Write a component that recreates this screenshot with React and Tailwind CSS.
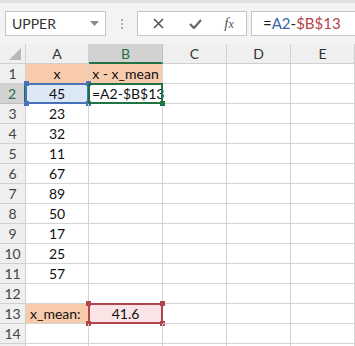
import React from "react";

const cols = ["A", "B", "C", "D", "E"];
const values = [null, 45, 23, 32, 11, 67, 89, 50, 17, 25, 57, null, null, null, null];

function Handle({ className }) {
    return <div className={"absolute w-[5px] h-[5px] " + className}></div>
}

function Cell({ children, className = "" }) {
    return (
        <div className={"relative h-[20px] border-r border-b border-[#d4d4d4] text-[14px] leading-[19px] text-[#111] whitespace-nowrap " + className}>
            {children}
        </div>
    )
}

function RowHead({ n, active }) {
    return (
        <div className={"h-[20px] border-r border-b flex items-center justify-center text-[14px] " +
            (active ? "bg-[#d2d2d2] border-r-[#217346] border-r-2 border-b-[#bdbdbd] text-[#217346]" : "bg-[#efefef] border-[#d0d0d0] text-[#444]")}>
            {n}
        </div>
    )
}

export default function App() {
    const rows = [];
    for (let r = 1; r <= 15; r++) {
        let a = null, b = null;
        if (r === 1) {
            a = <Cell className="bg-[#f8cbad] text-center">x</Cell>
            b = <Cell className="bg-[#f8cbad] text-center">x - x_mean</Cell>
        } else if (r === 2) {
            a = (
                <Cell className="bg-[#dde8f6] text-center">
                    45
                    <div className="absolute -left-px -top-px -right-px -bottom-px border-2 border-[#4a72b8]"></div>
                    <Handle className="bg-[#4a72b8] -left-[2px] -top-[3px]" />
                    <Handle className="bg-[#4a72b8] -right-[3px] -top-[3px]" />
                    <Handle className="bg-[#4a72b8] -left-[2px] -bottom-[3px]" />
                    <Handle className="bg-[#4a72b8] -right-[3px] -bottom-[3px]" />
                </Cell>
            )
            b = (
                <Cell className="pl-[3px] z-10">
                    =A2-$B$13
                    <div className="absolute -left-px -top-px -right-px -bottom-px border-2 border-[#217346]"></div>
                    <Handle className="bg-[#217346] -right-[3px] -bottom-[3px]" />
                </Cell>
            )
        } else if (r === 13) {
            a = <Cell className="bg-[#f8cbad] pl-[4px]">x_mean:</Cell>
            b = (
                <Cell className="bg-[#fbe4e5] text-center">
                    41.6
                    <div className="absolute -left-px -top-px -right-px -bottom-px border-2 border-[#b2444c]"></div>
                    <Handle className="bg-[#b2444c] -left-[3px] -top-[3px]" />
                    <Handle className="bg-[#b2444c] -right-[3px] -top-[3px]" />
                    <Handle className="bg-[#b2444c] -left-[3px] -bottom-[3px]" />
                    <Handle className="bg-[#b2444c] -right-[3px] -bottom-[3px]" />
                </Cell>
            )
        } else {
            a = <Cell className="text-center">{values[r - 1]}</Cell>
            b = <Cell></Cell>
        }
        rows.push(
            <React.Fragment key={r}>
                <RowHead n={r < 15 ? r : ""} active={r === 2} />
                {a}
                {b}
                <Cell></Cell>
                <Cell></Cell>
                <Cell></Cell>
            </React.Fragment>
        )
    }

    return (
        <div className="w-[355px] h-[346px] overflow-hidden bg-white" style={{ fontFamily: "Lato, 'Open Sans', sans-serif" }}>
            <div className="h-[44px] bg-[#f3f3f3] border-t-[3px] border-[#e1e1e1] flex items-start pt-[8px] pl-[5px]">
                <div className="w-[101px] h-[25px] bg-white border border-[#c6c6c6] flex items-center justify-between pl-[6px] pr-[6px]">
                    <span className="text-[14px] text-[#333]">UPPER</span>
                    <svg width="9" height="5" viewBox="0 0 9 5"><path d="M0 0h9L4.5 5z" fill="#8a8a8a" /></svg>
                </div>
                <div className="w-[31px] h-[25px] flex flex-col items-center justify-center gap-[2px]">
                    <div className="w-[2px] h-[2px] bg-[#b0b0b0]"></div>
                    <div className="w-[2px] h-[2px] bg-[#b0b0b0]"></div>
                    <div className="w-[2px] h-[2px] bg-[#b0b0b0]"></div>
                </div>
                <div className="w-[110px] h-[25px] bg-white border border-[#c6c6c6] flex items-center">
                    <div className="w-[40px] flex justify-center">
                        <svg width="11" height="11" viewBox="0 0 11 11"><path d="M1 1L10 10M10 1L1 10" stroke="#555" strokeWidth="1.6" /></svg>
                    </div>
                    <div className="w-[34px] flex justify-center">
                        <svg width="13" height="10" viewBox="0 0 13 10"><path d="M1 5l4 4 7-8" stroke="#666" strokeWidth="2.2" fill="none" /></svg>
                    </div>
                    <div className="w-[34px] flex justify-center items-baseline text-[15px] leading-none italic text-[#555]" style={{ fontFamily: "'Liberation Serif', serif" }}>
                        <span>f</span><span className="text-[12px]">x</span>
                    </div>
                </div>
                <div className="ml-[4px] flex-1 h-[25px] bg-white border border-[#c6c6c6] border-r-0 flex items-center pl-[11px] text-[15px]">
                    <span className="text-[#222]">=</span>
                    <span className="text-[#3a62ad]">A2</span>
                    <span className="text-[#222]">-</span>
                    <span className="text-[#b5454c]">$B$13</span>
                </div>
            </div>
            <div className="grid grid-cols-[26px_63px_74px_64px_64px_64px]">
                <div className="h-[20px] bg-[#efefef] border-r border-b border-[#d0d0d0] relative">
                    <svg className="absolute right-[4px] bottom-[3px]" width="12" height="12" viewBox="0 0 12 12"><path d="M12 0V12H0z" fill="#b9b9b9" /></svg>
                </div>
                {cols.map((c) => (
                    <div key={c} className={"h-[20px] border-r flex items-center justify-center text-[14px] " +
                        (c === "B" ? "bg-[#d2d2d2] border-b-2 border-b-[#217346] border-r-[#bdbdbd] text-[#217346]" : "bg-[#efefef] border-b border-[#d0d0d0] text-[#333]")}>
                        {c}
                    </div>
                ))}
                {rows}
            </div>
        </div>
    )
}
